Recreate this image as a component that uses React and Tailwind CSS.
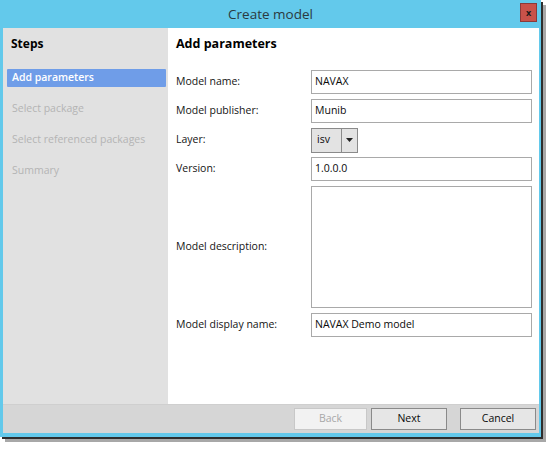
import React from "react";

const font = { fontFamily: '"Open Sans", "Noto Sans", sans-serif' };

function Field({ label, children, tall }) {
  return (
    <div className={`flex items-center ${tall ? "h-[122px]" : "h-[24px]"}`}>
      <div className="w-[135px] shrink-0 text-[10.5px] text-[#141414]">{label}</div>
      {children}
    </div>
  );
}

function TextBox({ value, tall }) {
  return (
    <div
      className={`flex-1 border border-[#a9a9a9] bg-white px-[3px] text-[10.5px] text-[#0a0a0a] ${
        tall ? "h-full" : "h-[24px] flex items-center"
      }`}
    >
      {value}
    </div>
  );
}

function Button({ children, disabled }) {
  return (
    <div
      className={`flex h-[22px] items-center justify-center border text-[10.5px] ${
        disabled
          ? "w-[73px] border-[#c8c8c8] bg-[#f2f2f2] text-[#a8a8a8]"
          : "w-[76px] border-[#8a8a8a] bg-[#e6e6e6] text-[#0a0a0a]"
      }`}
    >
      {children}
    </div>
  );
}

export default function App() {
  const steps = ["Select package", "Select referenced packages", "Summary"];

  return (
    <div className="h-[450px] w-[549px] bg-white" style={font}>
      <div className="flex h-[437px] w-[541px] flex-col bg-[#63c9eb] shadow-[2px_2px_0_#2e2e2e,5px_5px_0_#a8a8a8]">
        {/* title bar */}
        <div className="relative flex h-[28px] shrink-0 items-center justify-center">
          <span className="text-[13.5px] text-[#2b3a40]">Create model</span>
          <div className="absolute right-[4px] top-[3px] flex h-[19px] w-[17px] items-center justify-center border border-[#8a3a3a] bg-[#c9524a] text-[9px] font-bold leading-none text-[#1a1a1a]">
            x
          </div>
        </div>

        <div className="ml-[3px] mr-[2px] flex flex-1 flex-col">
          <div className="flex flex-1">
            {/* steps pane */}
            <div className="w-[165px] shrink-0 bg-[#e1e1e1] pl-[4px] pr-[2px]">
              <div className="flex h-[32px] items-center pl-[4px] text-[12px] font-bold text-black">Steps</div>
              <div className="mt-[9px] flex flex-col gap-[13px]">
                <div className="flex h-[18px] items-center rounded-[1px] bg-[#6f9de8] pl-[5px] text-[10.5px] font-semibold text-white">
                  Add parameters
                </div>
                {steps.map((s) => (
                  <div key={s} className="flex h-[18px] items-center pl-[5px] text-[10.5px] text-[#b4b4b4]">
                    {s}
                  </div>
                ))}
              </div>
            </div>

            {/* parameters */}
            <div className="flex-1 bg-white pl-[8px] pr-[7px]">
              <div className="flex h-[32px] items-center text-[12.5px] font-bold text-black">Add parameters</div>
              <div className="mt-[10px] flex flex-col gap-[5px]">
                <Field label="Model name:">
                  <TextBox value="NAVAX" />
                </Field>
                <Field label="Model publisher:">
                  <TextBox value="Munib" />
                </Field>
                <Field label="Layer:">
                  <div className="flex h-[25px] w-[47px] border border-[#8a8a8a] bg-[#e3e3e3] text-[10.5px] text-[#0a0a0a]">
                    <div className="flex w-[30px] items-center border-r border-[#8a8a8a] pl-[5px]">isv</div>
                    <div className="flex flex-1 items-center justify-center">
                      <svg width="7" height="4" viewBox="0 0 7 4">
                        <path d="M0 0h7L3.5 4z" fill="#222" />
                      </svg>
                    </div>
                  </div>
                </Field>
                <Field label="Version:">
                  <TextBox value="1.0.0.0" />
                </Field>
                <Field label="Model description:" tall>
                  <TextBox value="" tall />
                </Field>
                <Field label="Model display name:">
                  <TextBox value="NAVAX Demo model" />
                </Field>
              </div>
            </div>
          </div>

          {/* footer */}
          <div className="flex h-[29px] shrink-0 items-center justify-end border-t border-[#cfcfcf] bg-[#d6d6d6] pr-[3px]">
            <Button disabled>Back</Button>
            <div className="ml-[4px]">
              <Button>Next</Button>
            </div>
            <div className="ml-[13px]">
              <Button>Cancel</Button>
            </div>
          </div>
        </div>
        <div className="h-[4px] shrink-0" />
      </div>
    </div>
  );
}
